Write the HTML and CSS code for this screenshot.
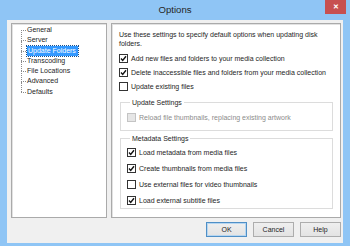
FILE: index.html
```html
<!DOCTYPE html>
<html lang="en">
<head>
    <meta charset="UTF-8">
    <title>Options</title>
    <link rel="stylesheet" href="styles.css">
</head>
<body>
    <div class="window">
        <div class="titlebar">
            <span class="title">Options</span>
            <span class="close">&#x2715;</span>
        </div>

        <div class="client">
            <div class="panes">
                <ul class="tree">
                    <li>General</li>
                    <li>Server</li>
                    <li><span class="selected">Update Folders</span></li>
                    <li>Transcoding</li>
                    <li>File Locations</li>
                    <li>Advanced</li>
                    <li>Defaults</li>
                </ul>

                <div class="page">
                    <p class="intro">Use these settings to specify default options when updating disk<br>folders.</p>

                    <label class="check-row"><span class="box checked"></span>Add new files and folders to your media collection</label>
                    <label class="check-row"><span class="box checked"></span>Delete inaccessible files and folders from your media collection</label>
                    <label class="check-row"><span class="box"></span>Update existing files</label>

                    <fieldset class="group update-group">
                        <legend>Update Settings</legend>
                        <label class="check-row disabled"><span class="box"></span>Reload file thumbnails, replacing existing artwork</label>
                    </fieldset>

                    <fieldset class="group meta-group">
                        <legend>Metadata Settings</legend>
                        <label class="check-row"><span class="box checked"></span>Load metadata from media files</label>
                        <label class="check-row"><span class="box checked"></span>Create thumbnails from media files</label>
                        <label class="check-row"><span class="box"></span>Use external files for video thumbnails</label>
                        <label class="check-row"><span class="box checked"></span>Load external subtitle files</label>
                    </fieldset>
                </div>
            </div>

            <div class="buttons">
                <button class="default">OK</button>
                <button>Cancel</button>
                <button>Help</button>
            </div>
        </div>
    </div>
</body>
</html>
```

FILE: styles.css
```css
* {
    box-sizing: border-box;
    margin: 0;
    padding: 0;
}

body {
    font-family: 'Liberation Sans', Arial, sans-serif;
    font-size: 7px;
    color: #1e1e1e;
    background: #8fc5f5;
}

.window {
    width: 350px;
    height: 246px;
    display: flex;
    flex-direction: column;
    background: #8fc5f5;
}

.titlebar {
    height: 20px;
    display: grid;
    grid-template-columns: 1fr auto 1fr;
}

.title {
    grid-column: 2;
    font-size: 9.6px;
    line-height: 20px;
    color: #262626;
}

.close {
    grid-column: 3;
    justify-self: end;
    width: 21px;
    height: 14px;
    margin-right: 4px;
    background: #c75050;
    color: white;
    font-size: 7px;
    font-weight: bold;
    line-height: 14px;
    text-align: center;
}

.client {
    flex: 1;
    margin: 0 7px 3px;
    padding: 3px 2px 0 4px;
    background: #f0f0f0;
    display: flex;
    flex-direction: column;
}

.panes {
    height: 195px;
    display: flex;
    gap: 4px;
}

/* tree on the left */
.tree {
    width: 96px;
    list-style: none;
    background: white;
    border: 1px solid #aaaaaa;
    box-shadow: inset 1px 1px 0 #e2e2e2;
    padding: 1px 0 0 15px;
}

.tree li {
    position: relative;
    height: 10.3px;
    line-height: 10.3px;
    white-space: nowrap;
}

.tree li::before {
    content: '';
    position: absolute;
    left: -6px;
    top: 5px;
    width: 5px;
    border-top: 1px dotted #8a8a8a;
}

.tree li + li::after {
    content: '';
    position: absolute;
    left: -6px;
    top: -5px;
    height: 10.3px;
    border-left: 1px dotted #8a8a8a;
}

.selected {
    display: inline-block;
    background: #3399ff;
    color: white;
    padding: 0 2px 0 1px;
    line-height: 10px;
    outline: 1px dotted #1a4f8a;
}

/* settings page on the right */
.page {
    width: 230px;
    background: white;
    border: 1px solid #aaaaaa;
    box-shadow: inset 1px 1px 0 #e2e2e2;
    padding: 6px 7px 0 7px;
    white-space: nowrap;
}

.intro {
    line-height: 9px;
    margin-bottom: 3px;
}

.check-row {
    display: flex;
    align-items: center;
    gap: 3px;
    height: 14px;
}

.box {
    width: 9px;
    height: 9px;
    border: 1px solid #333333;
    background: white;
    flex-shrink: 0;
}

.box.checked {
    background: white url("data:image/svg+xml,%3Csvg xmlns='http://www.w3.org/2000/svg' viewBox='0 0 7 7'%3E%3Cpath d='M1 3.6 L2.7 5.4 L6 1.2' fill='none' stroke='%23111' stroke-width='1.4'/%3E%3C/svg%3E") center / 7px 7px no-repeat;
}

.disabled {
    color: #8c8c8c;
}

.disabled .box {
    background: #e6e6e6;
    border-color: #c4c4c4;
}

.group {
    border: 1px solid #dcdcdc;
    margin: 5px 0 0 1px;
    padding: 3px 0 6px 6px;
}

.group legend {
    line-height: 9px;
    margin-left: 3px;
    padding: 0 2px;
}

.meta-group {
    margin-top: 3px;
    padding: 1px 0 0 6px;
}

.meta-group .check-row {
    height: 16px;
}

/* dialog buttons */
.buttons {
    display: flex;
    justify-content: flex-end;
    gap: 6px;
    margin-top: 4px;
}

.buttons button {
    width: 41px;
    height: 15px;
    font-family: inherit;
    font-size: 7px;
    color: #1e1e1e;
    background: linear-gradient(#efefef, #e3e3e3);
    border: 1px solid #adadad;
}

.buttons button.default {
    border-color: #4f8fc6;
    box-shadow: inset 0 0 0 1px #b6d6f1;
}
```
